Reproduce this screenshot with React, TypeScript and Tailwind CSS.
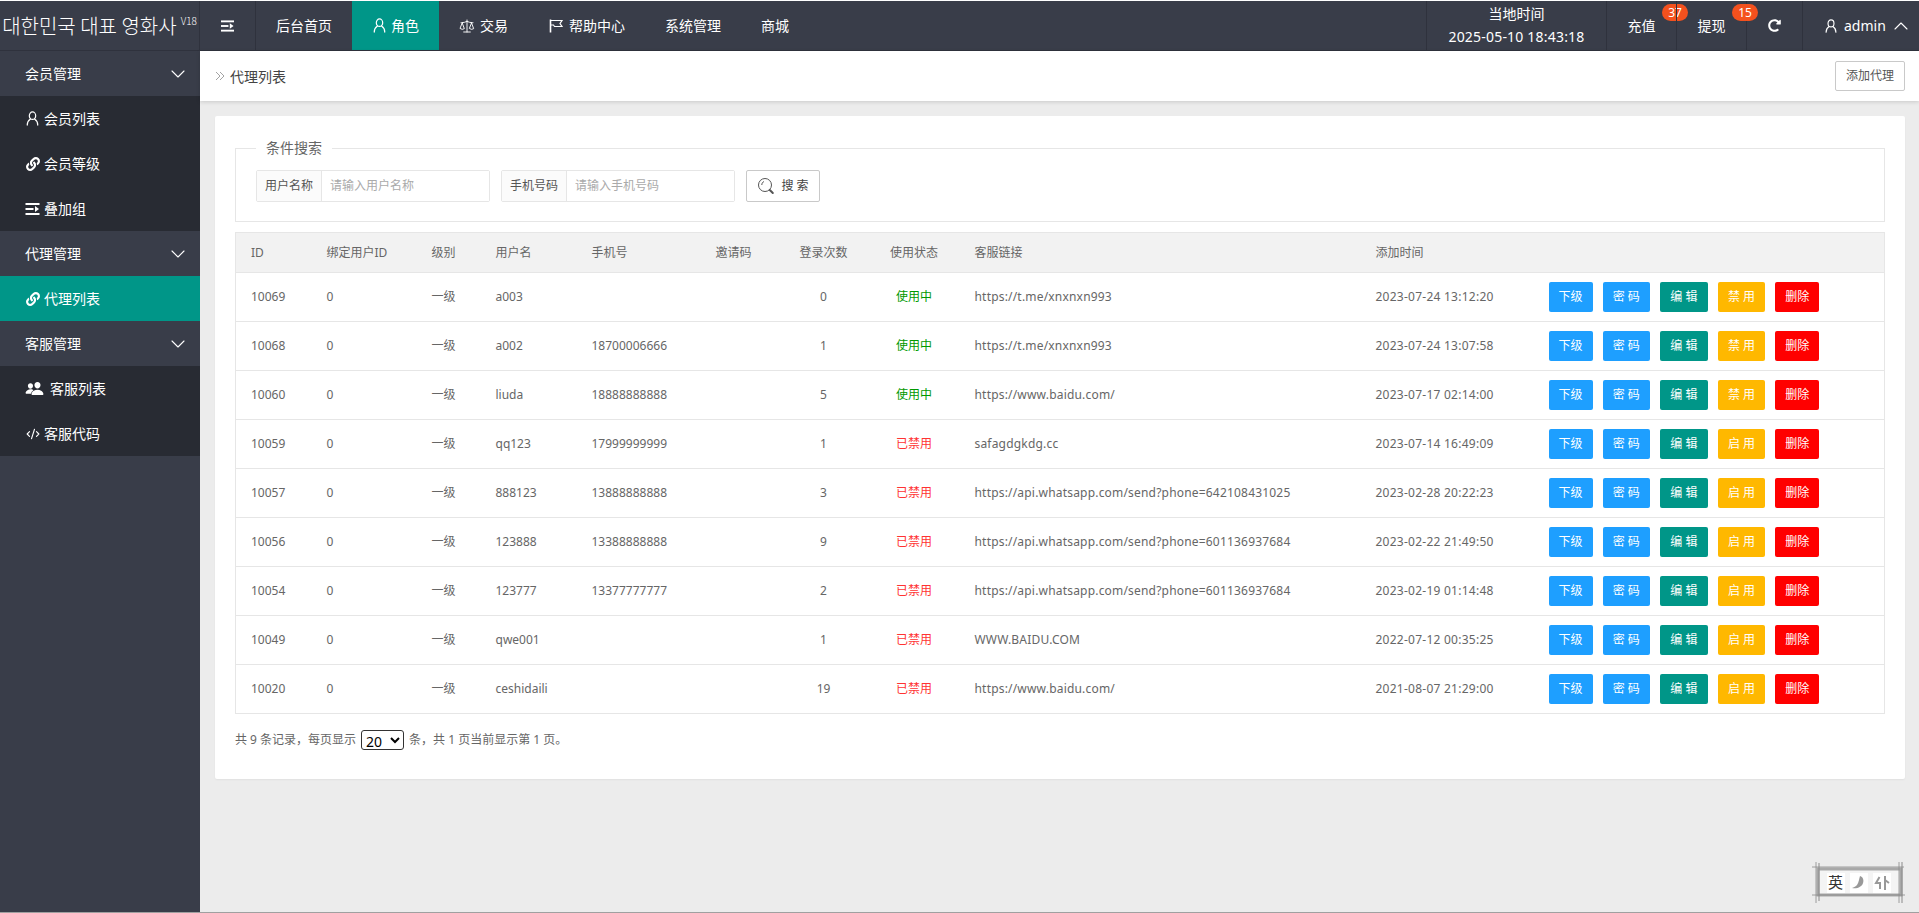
import { ChevronDown, ChevronUp, CodeXml, Scale } from "lucide-react";
import { FaLink, FaRedoAlt } from "react-icons/fa";
import { IoPeople } from "react-icons/io5";

const rows = [
  { id: 10069, name: "a003", phone: "", logins: 0, active: true, url: "https://t.me/xnxnxn993", time: "2023-07-24 13:12:20" },
  { id: 10068, name: "a002", phone: "18700006666", logins: 1, active: true, url: "https://t.me/xnxnxn993", time: "2023-07-24 13:07:58" },
  { id: 10060, name: "liuda", phone: "18888888888", logins: 5, active: true, url: "https://www.baidu.com/", time: "2023-07-17 02:14:00" },
  { id: 10059, name: "qq123", phone: "17999999999", logins: 1, active: false, url: "safagdgkdg.cc", time: "2023-07-14 16:49:09" },
  { id: 10057, name: "888123", phone: "13888888888", logins: 3, active: false, url: "https://api.whatsapp.com/send?phone=642108431025", time: "2023-02-28 20:22:23" },
  { id: 10056, name: "123888", phone: "13388888888", logins: 9, active: false, url: "https://api.whatsapp.com/send?phone=601136937684", time: "2023-02-22 21:49:50" },
  { id: 10054, name: "123777", phone: "13377777777", logins: 2, active: false, url: "https://api.whatsapp.com/send?phone=601136937684", time: "2023-02-19 01:14:48" },
  { id: 10049, name: "qwe001", phone: "", logins: 1, active: false, url: "WWW.BAIDU.COM", time: "2022-07-12 00:35:25" },
  { id: 10020, name: "ceshidaili", phone: "", logins: 19, active: false, url: "https://www.baidu.com/", time: "2021-08-07 21:29:00" },
];

function UserIcon({ className }: { className?: string }) {
  return (
    <svg viewBox="0 0 16 16" fill="none" stroke="currentColor" strokeWidth="1.3" className={className}>
      <ellipse cx="8" cy="5" rx="3.4" ry="4" />
      <path d="M2.4 15c0-3.2 1.6-5.2 3.4-6.4M13.6 15c0-3.2-1.6-5.2-3.4-6.4" strokeLinecap="round" />
    </svg>
  );
}

function ShrinkIcon({ className }: { className?: string }) {
  return (
    <svg viewBox="0 0 14 12" fill="currentColor" className={className}>
      <rect x="0" y="0" width="14" height="2" />
      <rect x="0" y="5" width="8" height="2" />
      <path d="M9.5 3l4 3-4 3z" />
      <rect x="0" y="10" width="14" height="2" />
    </svg>
  );
}

function FlagIcon({ className }: { className?: string }) {
  return (
    <svg viewBox="0 0 16 16" fill="none" stroke="currentColor" strokeWidth="1.2" className={className}>
      <path d="M2.5 1.5v13" strokeWidth="1.6" />
      <path d="M2.5 2.5h11.5l-2 3 2 3H6.5l-1-1.5h-3" />
    </svg>
  );
}

function SearchIcon() {
  return (
    <svg viewBox="0 0 18 18" fill="none" stroke="#555" strokeWidth="1" className="h-[18px] w-[18px]">
      <circle cx="8" cy="8" r="6.5" />
      <path d="M4.8 8c0-1.8 1-3 2.2-3.5" />
      <path d="M12.8 13l3 3" strokeWidth="2" strokeLinecap="round" />
    </svg>
  );
}

function Stamp() {
  return (
    <div className="absolute right-[14px] bottom-[9px] flex h-[41px] w-[93px] items-center justify-center">
      <svg viewBox="0 0 93 41" fill="none" className="absolute inset-0 h-full w-full" stroke="#8a8a8a">
        <rect x="6" y="7" width="83" height="26" fill="#f4f4f4" strokeWidth="3" stroke="#a8a8a8" />
        <path d="M0 5h92M0 33h93M4 0v41M87 0v41" strokeWidth="0.8" />
        <path d="M7 1v38M90 0v41" strokeWidth="1" />
      </svg>
      <div className="relative flex items-center gap-[5px]">
        <span className="flex h-[20px] w-[18px] items-center justify-center bg-white text-[15px] leading-none text-[#333]">英</span>
        <span className="flex h-[20px] w-[18px] items-center justify-center bg-white">
          <svg viewBox="0 0 16 16" className="h-[16px] w-[16px]" fill="#999">
            <path d="M9 1c3 1 4 4 3 7-1 4-6 6-11 5 3-1 4-2 5-3 2-3 2-6 3-9z" />
          </svg>
        </span>
        <span className="flex h-[20px] w-[18px] items-center justify-center bg-white">
          <svg viewBox="0 0 16 16" className="h-[16px] w-[16px]" fill="none" stroke="#999" strokeWidth="2">
            <path d="M5.5 2L2 8h4v6M11 1v14M11 5l4 3" />
          </svg>
        </span>
      </div>
    </div>
  );
}

function SideGroup({ label }: { label: string }) {
  return (
    <div className="flex h-[45px] items-center justify-between pr-[10px] pl-[25px] text-[14px] text-white">
      <span>{label}</span>
      <ChevronDown className="h-6 w-6" strokeWidth={1.1} />
    </div>
  );
}

function SideItem({ icon, label, active }: { icon: React.ReactNode; label: string; active?: boolean }) {
  return (
    <div className={`flex h-[45px] items-center gap-[4px] pl-[25px] text-[14px] text-white ${active ? "bg-[#009688]" : ""}`}>
      <span className="flex w-[15px] justify-center">{icon}</span>
      <span>{label}</span>
    </div>
  );
}

function OpButton({ label, color, wide }: { label: string; color: string; wide?: boolean }) {
  return (
    <span className={`inline-flex h-[30px] items-center justify-center rounded-[2px] text-[12px] text-white ${wide ? "w-[47.6px]" : "w-[44px]"} ${color}`}>
      {label}
    </span>
  );
}

function SearchField({ label, placeholder }: { label: string; placeholder: string }) {
  return (
    <div className="flex h-[32px] w-[234px] rounded-[2px] border border-[#e6e6e6] text-[12px]">
      <span className="flex w-[65px] shrink-0 items-center justify-center border-r border-[#e6e6e6] bg-[#fbfbfb] text-[#555]">{label}</span>
      <input className="min-w-0 flex-1 bg-white pl-[8px] text-[12px] outline-none placeholder:text-[#aaa]" placeholder={placeholder} />
    </div>
  );
}

export default function App() {
  const th = "h-[40px] border-b border-[#e6e6e6] px-[15px] font-normal";
  const td = "h-[49px] border-b border-[#e6e6e6] px-[15px]";

  return (
    <div className="relative flex h-screen flex-col overflow-hidden border-b border-[#a0a0a0] bg-white pt-px font-[family-name:'Noto_Sans','Noto_Sans_CJK_SC',sans-serif]">
      {/* top bar */}
      <header className="flex h-[50px] shrink-0 items-stretch border-b border-[#2f323d] bg-[#393d49] text-[14px] text-white">
        <div className="flex w-[200px] items-center justify-center border-r border-[#2f323d] font-[family-name:'Noto_Sans_CJK_KR',sans-serif] text-[20px] font-light whitespace-nowrap">
          대한민국 대표 영화사<sup className="ml-[4px] text-[10px]">V18</sup>
        </div>
        <div className="flex w-[56px] items-center justify-center border-r border-[#2f323d]">
          <ShrinkIcon className="h-[12px] w-[13px]" />
        </div>
        <div className="flex items-center px-5">后台首页</div>
        <div className="flex items-center gap-[4px] bg-[#009688] px-5">
          <UserIcon className="h-[15px] w-[15px]" />角色
        </div>
        <div className="flex items-center gap-[5px] px-5">
          <Scale className="h-4 w-4" strokeWidth={1.4} />交易
        </div>
        <div className="flex items-center gap-[5px] px-5">
          <FlagIcon className="h-[16px] w-[16px]" />帮助中心
        </div>
        <div className="flex items-center px-5">系统管理</div>
        <div className="flex items-center px-5">商城</div>

        <div className="ml-auto flex w-[180px] flex-col items-center justify-center gap-[3px] border-l border-[#2f323d] leading-[20px]">
          <span>当地时间</span>
          <span className="tracking-[0.2px] whitespace-nowrap">2025-05-10 18:43:18</span>
        </div>
        <div className="relative flex w-[70px] items-center justify-center border-l border-[#2f323d]">
          充值
          <span className="absolute top-[3px] left-[55px] flex h-[17px] w-[26px] items-center justify-center rounded-full bg-[#f4511e] text-[12px]">37</span>
        </div>
        <div className="relative flex w-[70px] items-center justify-center border-l border-[#2f323d]">
          提现
          <span className="absolute top-[3px] left-[55px] flex h-[17px] w-[26px] items-center justify-center rounded-full bg-[#f4511e] text-[12px]">15</span>
        </div>
        <div className="flex w-[56px] items-center justify-center border-l border-[#2f323d]">
          <FaRedoAlt className="h-[13px] w-[13px]" />
        </div>
        <div className="flex w-[117px] items-center gap-[6px] border-l border-[#2f323d] pl-[21px]">
          <UserIcon className="h-[14px] w-[14px]" />
          <span>admin</span>
          <ChevronUp className="-ml-[3px] h-6 w-6 shrink-0" strokeWidth={1.1} />
        </div>
      </header>

      <div className="flex min-h-0 flex-1">
        {/* side menu */}
        <aside className="w-[200px] shrink-0 bg-[#393d49]">
          <SideGroup label="会员管理" />
          <div className="bg-[#282b33]">
            <SideItem icon={<UserIcon className="h-[15px] w-[15px]" />} label="会员列表" />
            <SideItem icon={<FaLink className="h-[14px] w-[14px]" />} label="会员等级" />
            <SideItem icon={<ShrinkIcon className="h-[12px] w-[15px]" />} label="叠加组" />
          </div>
          <SideGroup label="代理管理" />
          <SideItem active icon={<FaLink className="h-[14px] w-[14px]" />} label="代理列表" />
          <SideGroup label="客服管理" />
          <div className="bg-[#282b33]">
            <div className="flex h-[45px] items-center gap-[6px] pl-[25px] text-[14px] text-white">
              <IoPeople className="h-[19px] w-[19px]" />
              <span>客服列表</span>
            </div>
            <SideItem icon={<CodeXml className="h-[14px] w-[14px]" />} label="客服代码" />
          </div>
        </aside>

        {/* content */}
        <main className="flex min-w-0 flex-1 flex-col bg-[#ececec]">
          <div className="flex h-[50px] shrink-0 items-center justify-between bg-white pr-[14px] pl-[15px] shadow-[0_1px_4px_rgba(0,0,0,0.15)]">
            <div className="flex items-center gap-[5px] text-[14px] text-[#444]">
              <svg viewBox="0 0 10 10" fill="none" stroke="#999" strokeWidth="0.9" className="h-[10px] w-[10px]">
                <path d="M1 1l4 4-4 4M5 1l4 4-4 4" />
              </svg>
              代理列表
            </div>
            <button type="button" className="h-[30px] w-[70px] rounded-[2px] border border-[#c9c9c9] bg-white text-[12px] text-[#555]">
              添加代理
            </button>
          </div>

          <div className="pt-[15px] pr-[14px] pl-[15px]">
            <div className="h-[663px] rounded-[2px] bg-white px-[20px] pt-[22px] shadow-[0_1px_2px_rgba(0,0,0,0.05)]">
              <fieldset className="h-[84px] border border-[#e6e6e6] pl-[20px]">
                <legend className="px-[10px] text-[14px] leading-[20px] text-[#666]">条件搜索</legend>
                <div className="flex items-center gap-[11px] pt-[12px]">
                  <SearchField label="用户名称" placeholder="请输入用户名称" />
                  <SearchField label="手机号码" placeholder="请输入手机号码" />
                  <button type="button" className="flex h-[32px] w-[74px] items-center justify-center gap-[6px] rounded-[2px] border border-[#c9c9c9] bg-white text-[12px] text-[#444]">
                    <SearchIcon />搜 索
                  </button>
                </div>
              </fieldset>

              <table className="mt-[10px] w-[1650px] table-fixed border border-[#e6e6e6] text-[12px] text-[#666]">
                <colgroup>
                  <col className="w-[76px]" />
                  <col className="w-[105px]" />
                  <col className="w-[64px]" />
                  <col className="w-[96px]" />
                  <col className="w-[112px]" />
                  <col className="w-[90px]" />
                  <col className="w-[90px]" />
                  <col className="w-[91px]" />
                  <col className="w-[401px]" />
                  <col className="w-[173px]" />
                  <col />
                </colgroup>
                <thead className="bg-[#f2f2f2]">
                  <tr>
                    <th className={`${th} text-left`}>ID</th>
                    <th className={`${th} text-left`}>绑定用户ID</th>
                    <th className={`${th} text-left`}>级别</th>
                    <th className={`${th} text-left`}>用户名</th>
                    <th className={`${th} text-left`}>手机号</th>
                    <th className={`${th} text-center`}>邀请码</th>
                    <th className={`${th} text-center`}>登录次数</th>
                    <th className={`${th} text-center`}>使用状态</th>
                    <th className={`${th} text-left`}>客服链接</th>
                    <th className={`${th} text-left`}>添加时间</th>
                    <th className={th}></th>
                  </tr>
                </thead>
                <tbody>
                  {rows.map((row) => (
                    <tr key={row.id}>
                      <td className={td}>{row.id}</td>
                      <td className={td}>0</td>
                      <td className={td}>一级</td>
                      <td className={td}>{row.name}</td>
                      <td className={td}>{row.phone}</td>
                      <td className={td}></td>
                      <td className={`${td} text-center`}>{row.logins}</td>
                      <td className={`${td} text-center ${row.active ? "text-[#009900]" : "text-[#ff3333]"}`}>
                        {row.active ? "使用中" : "已禁用"}
                      </td>
                      <td className={`${td} tracking-[0.19px] whitespace-nowrap`}>{row.url}</td>
                      <td className={`${td} tracking-[0.25px] whitespace-nowrap`}>{row.time}</td>
                      <td className={td}>
                        <div className="flex gap-[10px]">
                          <OpButton label="下级" color="bg-[#1e9fff]" />
                          <OpButton label="密 码" color="bg-[#1e9fff]" wide />
                          <OpButton label="编 辑" color="bg-[#009688]" wide />
                          <OpButton label={row.active ? "禁 用" : "启 用"} color="bg-[#ffb800]" wide />
                          <OpButton label="删除" color="bg-[#ff0000]" />
                        </div>
                      </td>
                    </tr>
                  ))}
                </tbody>
              </table>

              <div className="mt-[16px] flex items-center gap-[5px] text-[12px] text-[#666]">
                <span>共 9 条记录，每页显示</span>
                <select defaultValue="20" className="h-[20px] w-[43px] rounded-[3px] border border-[#333] bg-white text-[14px] leading-none text-black">
                  <option>10</option>
                  <option>20</option>
                  <option>50</option>
                </select>
                <span>条，共 1 页当前显示第 1 页。</span>
              </div>
            </div>
          </div>
        </main>
      </div>

      <Stamp />
    </div>
  );
}
